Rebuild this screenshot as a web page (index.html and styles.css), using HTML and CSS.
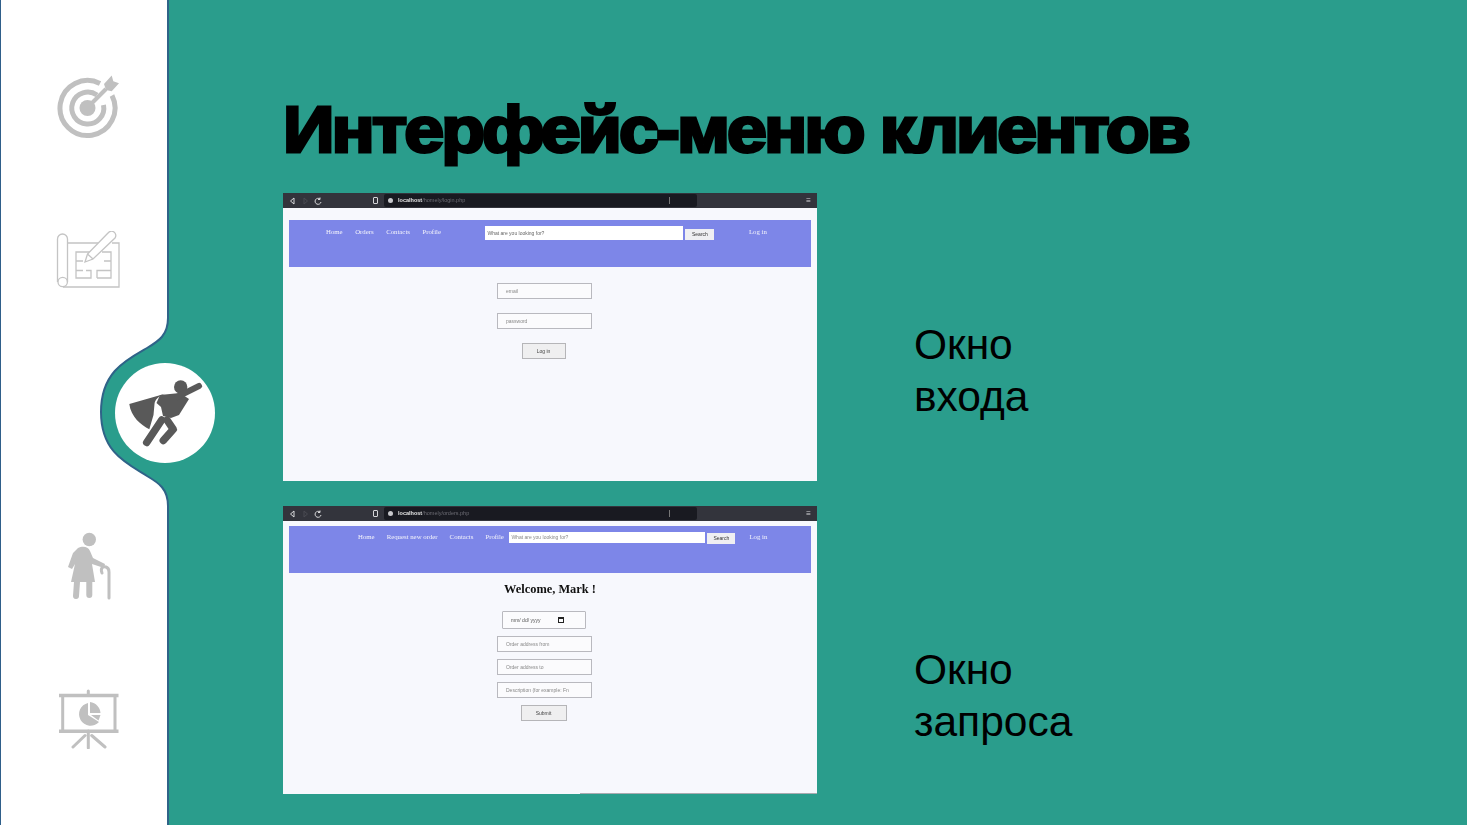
FILE: index.html

```html
<!DOCTYPE html>
<html lang="ru">
<head>
    <meta charset="UTF-8">
    <title>Интерфейс-меню клиентов</title>
    <link rel="stylesheet" href="styles.css">
</head>
<body>
<aside class="sidebar">
    <svg class="wave" width="170" height="825" viewBox="0 0 170 825">
        <path class="wave-fill" d="M0 0H167V318C167 335 158 341 146 348C125 360 100 372 100 412C100 452 125 463 146 476C158 483 167 489 167 506V825H0Z"/>
        <path class="wave-line" d="M167 0V318C167 335 158 341 146 348C125 360 100 372 100 412C100 452 125 463 146 476C158 483 167 489 167 506V825"/>
    </svg>
    <div class="slot">
        <svg class="icon" width="64" height="64" viewBox="0 0 64 64">
            <path class="ring" d="M44 8.500A27.500 27.500 0 1 0 56 20.500" stroke-width="5"/>
            <path class="ring" d="M41 20A16 16 0 1 0 47.500 30" stroke-width="5"/>
            <circle class="solid" cx="31.500" cy="33" r="8"/>
            <path class="ring" d="M32 32L50 14" stroke-width="4"/>
            <path class="solid" d="M48 9L55.700 .5L57.300 6.200L63 8.200L55.700 16.200L50 15Z"/>
        </svg>
    </div>
    <div class="slot">
        <svg class="icon" width="64" height="58" viewBox="0 0 64 58">
            <g class="thin">
                <path d="M1.500 51V8a5 5 0 0 1 10 0V51"/>
                <circle cx="6.700" cy="51" r="4.700"/>
                <path d="M7 56H63V12H56M44 12H12"/>
                <path d="M44 21H20V47H35V39.500H30M20 39.500H27M20 30H27M41 47V39.500H55M41 47H55V21H46M55 30H48"/>
                <path d="M29 31L31.500 23L52 2A4 4 0 0 1 59 7L37 28Z" fill="#fff"/>
                <path d="M31.500 23L37 28"/>
            </g>
        </svg>
    </div>
    <div class="slot slot-active">
        <div class="active-circle">
            <svg width="76" height="68" viewBox="0 0 76 68">
                <circle class="hero" cx="53.700" cy="8" r="6.700"/>
                <path class="hero" d="M2.300 25L38 14.700C32 17 28 20 27.500 25L26.500 36L22.300 50.300C14 46 4 38 2.300 25Z"/>
                <path class="hero" d="M33 16L53 14L62 20L52 36L44 39L36 37L34 28L29.500 24Z"/>
                <path class="hero-arm" d="M50 18L72 7"/>
                <path class="hero-leg" d="M34.700 41L19.700 63.500"/>
                <path class="hero-leg" d="M40 41L46.300 50.300L36.300 61.500"/>
            </svg>
        </div>
    </div>
    <div class="slot">
        <svg class="icon icon-woman" width="46" height="68" viewBox="0 0 46 68">
            <circle class="solid" cx="24.300" cy="7.500" r="6.700"/>
            <path class="solid" d="M13 16C17 14 23 14 25 19L28 26L40 32L39 36L27 32L30 50H6L10 32L7 37L3 35L8 21Z"/>
            <path class="limb" d="M12 50L11 64M24.300 50V63" stroke-width="6"/>
            <path class="limb" d="M37 41C35 36 38 34 41 35C44 36 44 38 44 40V66" stroke-width="3"/>
        </svg>
    </div>
    <div class="slot">
        <svg class="icon icon-board" width="60" height="60" viewBox="0 0 60 60">
            <path class="ring" d="M29.300 2V6M3.700 6.500V42M56 6.500V42M29.300 42V59M26 46.500L14 58M32.700 46.500L46 58" stroke-width="3" stroke-linecap="round"/>
            <path class="ring" d="M0 6.500H59.500M0 42.200H59.500" stroke-width="3.500"/>
            <path class="solid" d="M29 14A11.500 11.500 0 1 0 40 33L29 26Z"/>
            <path class="solid" d="M31 13C37 14 41 18 41.500 24H31Z"/>
            <path class="solid" d="M32 26H41.500L39.500 31.500Z"/>
        </svg>
    </div>
</aside>

<main class="content">
    <h1 class="title">Интерфейс-меню клиентов</h1>

    <section class="row">
        <div class="shot">
            <div class="browser-bar">
                <svg class="browser-icons" width="34" height="8" viewBox="0 0 34 8">
                    <path class="bar-icon" d="M5 1L1.500 4L5 7Z"/>
                    <path class="bar-icon-off" d="M15 1L18.500 4L15 7Z"/>
                    <path class="bar-icon" d="M31 2A3 3 0 1 0 32 5M31 .5V2.500H29"/>
                </svg>
                <span class="bookmark"></span>
                <div class="address"><i class="dot"></i><b>localhost</b>/homely/login.php<i class="tick"></i></div>
                <span class="menu">≡</span>
            </div>
            <div class="page">
                <div class="topnav topnav-login">
                    <a>Home</a><a>Orders</a><a>Contacts</a><a>Profile</a>
                    <span class="search search-login">What are you looking for?</span>
                    <span class="search-btn search-btn-login">Search</span>
                    <a class="login-link">Log in</a>
                </div>
                <div class="form form-login">
                    <span class="field">email</span>
                    <span class="field">password</span>
                    <span class="submit submit-login">Log in</span>
                </div>
            </div>
        </div>
        <p class="label">Окно<br>входа</p>
    </section>

    <section class="row row-second">
        <div class="shot shot-orders">
            <div class="browser-bar">
                <svg class="browser-icons" width="34" height="8" viewBox="0 0 34 8">
                    <path class="bar-icon" d="M5 1L1.500 4L5 7Z"/>
                    <path class="bar-icon-off" d="M15 1L18.500 4L15 7Z"/>
                    <path class="bar-icon" d="M31 2A3 3 0 1 0 32 5M31 .5V2.500H29"/>
                </svg>
                <span class="bookmark"></span>
                <div class="address"><i class="dot"></i><b>localhost</b>/homely/orders.php<i class="tick"></i></div>
                <span class="menu">≡</span>
            </div>
            <div class="page page-orders">
                <div class="topnav topnav-orders">
                    <a>Home</a><a>Request new order</a><a>Contacts</a><a>Profile</a>
                    <span class="search search-orders">What are you looking for?</span>
                    <span class="search-btn search-btn-orders">Search</span>
                    <a class="login-link">Log in</a>
                </div>
                <h2 class="welcome">Welcome, Mark !</h2>
                <div class="form form-orders">
                    <span class="field field-date">mm/ dd/ yyyy<i class="calendar"></i></span>
                    <span class="field">Order address from</span>
                    <span class="field">Order address to</span>
                    <span class="field">Description (for example: Fn</span>
                    <span class="submit submit-orders">Submit</span>
                </div>
            </div>
        </div>
        <p class="label label-second">Окно<br>запроса</p>
    </section>
</main>
</body>
</html>
```

FILE: styles.css

```css
* {
    box-sizing: border-box;
}
body {
    margin: 0;
    width: 1467px;
    height: 825px;
    overflow: hidden;
    display: flex;
    background-color: #2a9d8c;
    font-family: 'Liberation Sans', sans-serif;
    color: #000;
}

/* sidebar */
.sidebar {
    position: relative;
    width: 168px;
    flex: none;
    padding-top: 30px;
    border-left: 1px solid #2f5f8a;
}
.wave {
    position: absolute;
    top: 0;
    left: 0;
}
.wave-fill {
    fill: #fff;
}
.wave-line {
    fill: none;
    stroke: #2f6388;
    stroke-width: 2;
}
.slot {
    position: relative;
    height: 153px;
    display: flex;
    align-items: center;
    padding-left: 55px;
}
.slot-active {
    padding-left: 114px;
}
.icon-woman {
    margin-left: 9px;
}
.icon-board {
    margin-left: 3px;
}
.active-circle {
    width: 100px;
    height: 100px;
    flex: none;
    display: flex;
    align-items: center;
    justify-content: center;
    border-radius: 50%;
    background-color: #fff;
}
.ring {
    fill: none;
    stroke: #c0c0c0;
}
.solid {
    fill: #c0c0c0;
}
.limb {
    fill: none;
    stroke: #c0c0c0;
    stroke-linecap: round;
}
.thin {
    fill: none;
    stroke: #c4c4c4;
    stroke-width: 1.300;
}
.hero {
    fill: #595959;
}
.hero-arm {
    fill: none;
    stroke: #595959;
    stroke-width: 6;
    stroke-linecap: round;
}
.hero-leg {
    fill: none;
    stroke: #595959;
    stroke-width: 7.500;
    stroke-linecap: round;
    stroke-linejoin: round;
}

/* slide content */
.content {
    flex: 1;
    padding: 94px 0 0 115px;
}
.title {
    width: max-content;
    margin: 0 0 26px;
    height: 73px;
    font-size: 64px;
    line-height: 73px;
    font-weight: bold;
    letter-spacing: -2.600px;
    white-space: nowrap;
    -webkit-text-stroke: 3px #000;
    transform: scaleX(1.12);
    transform-origin: left center;
}
.row {
    display: flex;
    margin-bottom: 25px;
}
.label {
    margin: 0 0 0 97px;
    padding-top: 126px;
    font-size: 42.500px;
    line-height: 52px;
}
.label-second {
    padding-top: 138px;
}

/* embedded screenshots */
.shot {
    width: 534px;
    height: 288px;
    flex: none;
    display: flex;
    flex-direction: column;
    background-color: #f7f8fd;
    filter: blur(.35px);
}
.shot-orders {
    position: relative;
}
.shot-orders::after {
    content: "";
    position: absolute;
    right: 0;
    bottom: 0;
    width: 237px;
    height: 1px;
    background-color: #a9aab0;
}
.browser-bar {
    height: 15px;
    display: flex;
    align-items: center;
    background-color: #33343c;
    color: #d5d5d8;
    font-size: 6px;
    padding-left: 6px;
}
.browser-icons {
    width: 34px;
    flex: none;
    margin-right: 50px;
}
.bar-icon {
    fill: none;
    stroke: #d8d8da;
}
.bar-icon-off {
    fill: none;
    stroke: #4a4b52;
}
.bookmark {
    width: 5px;
    height: 7px;
    flex: none;
    margin-right: 6px;
    border: 1px solid #d5d5d8;
    border-radius: 1px;
}
.address {
    position: relative;
    width: 313px;
    height: 13px;
    flex: none;
    padding-left: 14px;
    line-height: 13px;
    font-size: 5.500px;
    color: #6c6c74;
    background-color: #191a21;
    border-radius: 2px;
}
.address b {
    color: #e4e4e4;
}
.dot {
    position: absolute;
    top: 4px;
    left: 4px;
    width: 5px;
    height: 5px;
    border-radius: 50%;
    background-color: #c8c8cc;
}
.tick {
    position: absolute;
    top: 3px;
    left: 285px;
    height: 7px;
    border-left: 1px solid #777;
}
.menu {
    margin-left: auto;
    margin-right: 6px;
    font-size: 8px;
}
.page {
    flex: 1;
    padding: 12px 6px 0;
}
.page-orders {
    padding-top: 5px;
}
.topnav {
    height: 47px;
    display: flex;
    align-items: flex-start;
    background-color: #7d86e8;
    color: #f4f4fb;
    font-family: 'Liberation Serif', serif;
    font-size: 6.800px;
    line-height: 8px;
    white-space: nowrap;
}
.topnav-login {
    padding: 7.500px 0 0 37px;
    gap: 12.500px;
}
.topnav-orders {
    padding: 7px 0 0 69px;
    gap: 12px;
}
.search {
    background-color: #fff;
    color: #666;
    font-family: 'Liberation Sans', sans-serif;
    font-size: 5px;
    padding-left: 2px;
}
.search-login {
    width: 198px;
    height: 14px;
    line-height: 14px;
    margin: -1.500px 0 0 32px;
}
.search-orders {
    width: 196px;
    height: 11px;
    line-height: 11px;
    margin: -1px 0 0 -6.500px;
    color: #888;
}
.search-btn {
    height: 11px;
    line-height: 11px;
    text-align: center;
    background-color: #efeff2;
    color: #333;
    font-family: 'Liberation Sans', sans-serif;
    font-size: 5px;
}
.search-btn-login {
    width: 29px;
    margin: 1px 0 0 -10.500px;
}
.search-btn-orders {
    width: 28px;
    margin: 0 0 0 -10px;
}
.login-link {
    margin-left: 22px;
}
.topnav-orders .login-link {
    margin-left: 2px;
}
.form {
    display: flex;
    flex-direction: column;
    align-items: center;
    width: 95px;
    margin-left: 208px;
    color: #888;
    font-size: 5px;
}
.form-login {
    margin-top: 16px;
    gap: 14px;
}
.form-orders {
    margin-top: 15px;
    gap: 7px;
}
.field {
    position: relative;
    width: 95px;
    height: 16px;
    line-height: 14px;
    padding-left: 8px;
    background-color: #fbfbfd;
    border: 1px solid #b9b9bf;
    white-space: nowrap;
    overflow: hidden;
}
.field-date {
    width: 84px;
    height: 18px;
    margin-right: 1px;
    line-height: 16px;
    color: #555;
    border-radius: 1px;
}
.calendar {
    position: absolute;
    top: 5px;
    right: 21px;
    width: 6px;
    height: 6px;
    border: 1px solid #222;
    border-top-width: 2px;
}
.submit {
    height: 16px;
    margin-right: 2px;
    line-height: 14px;
    text-align: center;
    background-color: #efeff0;
    border: 1px solid #b5b5b8;
    color: #444;
}
.submit-login {
    width: 44px;
}
.submit-orders {
    width: 46px;
}
.welcome {
    width: 522px;
    margin: 9px 0 0;
    height: 14px;
    line-height: 14px;
    font-family: 'Liberation Serif', serif;
    font-size: 12.400px;
    text-align: center;
    color: #111;
}
```
